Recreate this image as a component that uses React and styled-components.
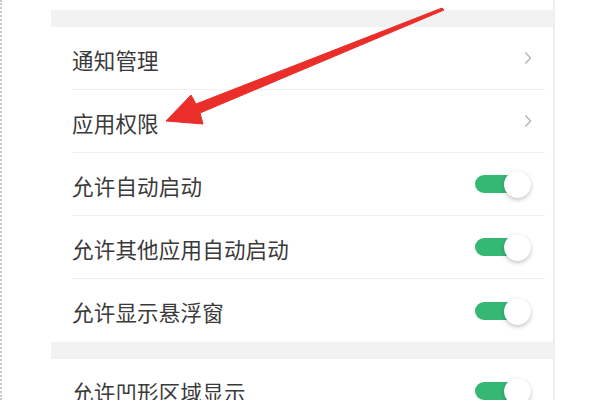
import React from 'react';
import styled, { createGlobalStyle } from 'styled-components';

const GlobalStyle = createGlobalStyle`
  html, body {
    margin: 0;
    padding: 0;
    background: #ffffff;
    overflow: hidden;
  }
  body {
    font-family: "Noto Sans CJK SC", "Noto Sans", sans-serif;
  }
`;

const Page = styled.div`
  position: relative;
  width: 600px;
  height: 400px;
  overflow: hidden;
  border-left: 2px dotted #c8c8c8;
  box-sizing: border-box;
  background: #fff;
`;

const Screen = styled.div`
  margin-left: 49px;
  width: 502px;
  height: 400px;
  border-right: 2px solid #eceef7;
  background: #fff;
  display: flex;
  flex-direction: column;
`;

const Stub = styled.div`
  height: 10px;
  flex: none;
`;

const Band = styled.div`
  height: 17px;
  flex: none;
  background: #f2f2f2;
`;

const Group = styled.div`
  display: flex;
  flex-direction: column;
  flex: none;
`;

const Row = styled.div`
  height: 63px;
  box-sizing: border-box;
  margin: 0 8px 0 21px;
  padding-right: 13px;
  display: flex;
  align-items: center;
  justify-content: space-between;
  border-bottom: ${(p) => (p.$last ? 'none' : '1px solid #f1f1f1')};
  flex: none;
`;

const Label = styled.span`
  font-size: 21.5px;
  color: #3a3a3a;
  letter-spacing: 0.2px;
  padding-top: 2px;
`;

const Chevron = () => (
  <svg width="8" height="14" viewBox="0 0 8 14">
    <polyline points="1.5,1.5 6.5,7 1.5,12.5" fill="none" stroke="#b4b4b4" strokeWidth="1.4" />
  </svg>
);

const ToggleWrap = styled.div`
  position: relative;
  width: 57px;
  height: 30px;
  display: flex;
  align-items: center;
`;

const Track = styled.div`
  width: 48px;
  height: 18px;
  border-radius: 9px;
  background: #34b874;
`;

const Knob = styled.div`
  position: absolute;
  right: 1px;
  top: 2px;
  width: 27px;
  height: 27px;
  border-radius: 50%;
  background: #fff;
  box-shadow: 0 2px 4px rgba(0, 0, 0, 0.22), 0 0 1px rgba(0, 0, 0, 0.1);
`;

const Toggle = () => (
  <ToggleWrap>
    <Track />
    <Knob />
  </ToggleWrap>
);

const Arrow = styled.svg`
  position: absolute;
  left: 0;
  top: 0;
  pointer-events: none;
`;

const groups = [
  [
    { label: '通知管理', kind: 'link' },
    { label: '应用权限', kind: 'link' },
    { label: '允许自动启动', kind: 'toggle' },
    { label: '允许其他应用自动启动', kind: 'toggle' },
    { label: '允许显示悬浮窗', kind: 'toggle' },
  ],
  [{ label: '允许凹形区域显示', kind: 'toggle' }],
];

export default function App() {
  return (
    <>
      <GlobalStyle />
      <Page>
        <Screen>
          <Stub />
          {groups.map((rows, gi) => (
            <React.Fragment key={gi}>
              <Band />
              <Group>
                {rows.map((r, i) => (
                  <Row key={r.label} $last={i === rows.length - 1}>
                    <Label>{r.label}</Label>
                    {r.kind === 'link' ? <Chevron /> : <Toggle />}
                  </Row>
                ))}
              </Group>
            </React.Fragment>
          ))}
        </Screen>
        <Arrow width="600" height="400" viewBox="0 0 600 400">
          <polygon
            points="164,121 189,95 194,104 440,8 442,10 198,113 201,124"
            fill="#ea2f2b"
            stroke="#ea2f2b"
            strokeWidth="1"
            strokeLinejoin="round"
          />
        </Arrow>
      </Page>
    </>
  );
}
